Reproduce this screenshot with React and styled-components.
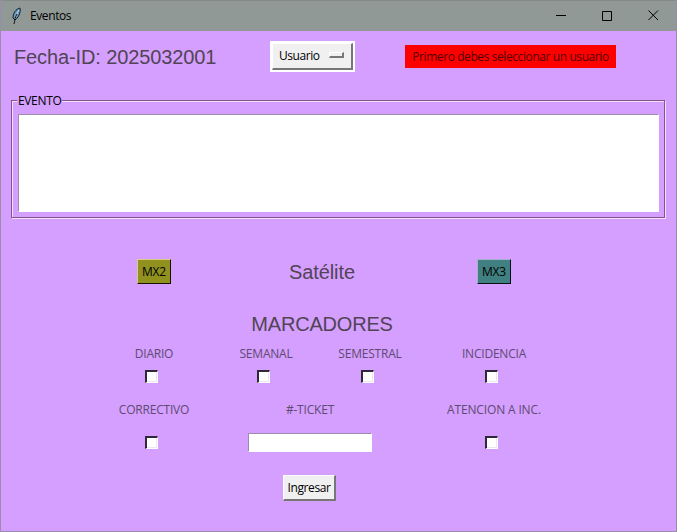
import React from 'react';
import styled, { createGlobalStyle } from 'styled-components';

const Global = createGlobalStyle`
  * { box-sizing: border-box; }
  body { margin: 0; background: #d49fff; }
`;
const Window = styled.main`
  width: 677px; height: 532px; background: #d49fff; overflow: hidden;
  border: 1px solid #9b8caa; border-top: 0;
  font: 12px/16px "Open Sans", "Noto Sans", sans-serif; color: #000;
  display: flex; flex-direction: column;
`;
const TitleBar = styled.header`
  height: 31px; flex: none; margin: 0 -1px; padding-left: 9px;
  background: #919996; border-top: 1px solid #858b89;
  display: flex; align-items: center;
`;
const Text = styled.span`
  white-space: nowrap; letter-spacing: ${p => p.$ls ?? 0}px;
`;
const AppTitle = styled(Text)`margin-left: 6px; flex: 1;`;
const Controls = styled.div`display: flex; width: 138px; height: 30px; margin-right: 1px; padding-bottom: 1px;`;
const Control = styled.div`
  width: 46px; display: flex; justify-content: center; align-items: center;
`;
const Heading = styled.h1`
  margin: 0; font: 400 20px/24px "Liberation Sans", Arial, sans-serif; color: #514455;
  white-space: nowrap; letter-spacing: ${p => p.$ls ?? 0}px;
`;
const Header = styled.section`
  height: 52px; flex: none; padding-left: 13px; display: grid;
  grid-template-columns: 256px 135px 211px; align-items: center;
`;
const SelectFrame = styled.div`
  width: 85px; height: 31px; padding: 2px; margin-bottom: 1px; background: #fff;
`;
const Select = styled.button`
  width: 81px; height: 27px; padding: 0 7px 0 6px; background: #f0f0f0;
  border: 1px solid #fff; border-right: 2px solid #767676; border-bottom: 2px solid #767676;
  font: inherit; color: inherit; display: flex; align-items: center; justify-content: space-between;
`;
const Indicator = styled.i`
  width: 15px; height: 6px; background: #f0f0f0; margin-top: -2px;
  border: 1px solid #fff; border-right: 2px solid #777; border-bottom: 2px solid #777;
`;
const Alert = styled.div`
  width: 211px; height: 23px; margin-bottom: 1px; padding-top: 1px; background: #f00; color: #510000;
  display: flex; align-items: center; justify-content: center;
`;
const EventGroup = styled.section`
  margin: 17px 0 0 10px; width: 654px; height: 118px; flex: none;
  border: 1px solid #82558f; padding: 0 5px 0 6px;
  box-shadow: inset 1px 1px 0 #f6ddff, 1px 1px 0 #f6ddff;
`;
const Legend = styled.div`
  width: 45px; height: 16px; margin: -8px 0 0 -1px; padding-left: 1px; background: #d49fff;
`;
const EventInput = styled.textarea`
  display: block; resize: none; width: 641px; height: 98px; margin-top: 5px;
  border: 1px solid #9b8caa; border-right-color: #fff; border-bottom-color: #fff;
  background: #fff; outline: 0;
`;
const Satellites = styled.section`
  height: 26px; flex: none; margin: 40px 0 0 136px; display: grid;
  grid-template-columns: 34px 302px 42px; align-items: center; justify-items: center;
`;
const Button = styled.button`
  width: ${p => p.$w ?? 34}px; height: ${p => p.$h ?? 25}px; padding: 1px 0 0;
  background: ${p => p.$bg ?? '#f0f0f0'}; border: 1px solid ${p => p.$light ?? '#fff'};
  border-right: ${p => p.$edge ?? 2}px solid ${p => p.$dark ?? '#777'};
  border-bottom: ${p => p.$edge ?? 2}px solid ${p => p.$dark ?? '#777'};
  font: inherit; color: inherit; display: flex; justify-content: center; align-items: center;
`;
const SatelliteTitle = styled(Heading)`padding-top: 2px;`;
const MarkerTitle = styled.div`
  margin: 28px 0 0 97px; width: 448px; height: 24px; flex: none; display: flex; justify-content: center;
`;
const Markers = styled.section`
  height: 40px; flex: none; margin: 10px 0 0 97px; display: grid;
  grid-template-columns: 112px 112px 96px 152px;
`;
const ActivityMarkers = styled(Markers)`
  height: 54px; margin-top: 16px; grid-template-columns: 112px 200px 168px;
`;
const Marker = styled.label`
  display: flex; flex-direction: column; align-items: center; color: #604a70;
`;
const Check = styled.input.attrs({ type: 'checkbox' })`
  appearance: none; width: 13px; height: 13px; margin: ${p => p.$gap ?? 8}px 6px 0 0;
  background: #fff; border: 2px solid #111; border-top-color: #30273a; border-left-color: #30273a;
  border-right: 1px solid #fff; border-bottom: 1px solid #fff;
  box-shadow: inset -1px -1px 0 #eee6f2;
`;
const Ticket = styled.input`
  width: 124px; height: 19px; margin: 15px 0 0; border: 1px solid #9b8caa;
  border-right-color: #fff; border-bottom-color: #fff; background: #fff; outline: 0;
`;
const Submit = styled(Button)`margin: 19px 0 0 282px; flex: none;`;

const Feather = () => (
  <svg width="15" height="18" viewBox="0 0 15 18" fill="none">
    <path d="M11 1C7 2 4 6 4 11L6 13C9 11 12 6 11 1Z" fill="#6798bd" stroke="#111d29" />
    <path d="M10 3C8 6 7 9 6 12" stroke="#c9e2f5" />
    <path d="M8 7C6 10 6 13 5 17" stroke="#111" />
  </svg>
);

export default function App() {
  return (
    <>
      <Global />
      <Window>
        <TitleBar>
          <Feather /><AppTitle $ls={-0.4}>Eventos</AppTitle>
          <Controls>
            <Control><svg width="11" height="11"><path d="M0 5.5H10" stroke="#000" /></svg></Control>
            <Control><svg width="10" height="10"><path d="M.5.5H9.5V9.5H.5Z" fill="none" stroke="#000" /></svg></Control>
            <Control><svg width="11" height="11"><path d="M.5.5L10 10M10 .5L.5 10" stroke="#000" /></svg></Control>
          </Controls>
        </TitleBar>
        <Header>
          <Heading $ls={-0.12}>Fecha-ID: 2025032001</Heading>
          <SelectFrame><Select><Text $ls={-0.45}>Usuario</Text><Indicator /></Select></SelectFrame>
          <Alert><Text $ls={-0.41}>Primero debes seleccionar un usuario</Text></Alert>
        </Header>
        <EventGroup>
          <Legend><Text $ls={-0.35}>EVENTO</Text></Legend>
          <EventInput aria-label="EVENTO" />
        </EventGroup>
        <Satellites>
          <Button $edge={1} $bg="#91911f" $light="#dccb86" $dark="#171300"><Text $ls={-0.2}>MX2</Text></Button>
          <SatelliteTitle $ls={-0.1}>Satélite</SatelliteTitle>
          <Button $edge={1} $bg="#408080" $light="#a9afd0" $dark="#07121b"><Text $ls={-0.2}>MX3</Text></Button>
        </Satellites>
        <MarkerTitle><Heading $ls={-0.2}>MARCADORES</Heading></MarkerTitle>
        <Markers>
          {['DIARIO', 'SEMANAL', 'SEMESTRAL', 'INCIDENCIA'].map(label => (
            <Marker key={label}><Text $ls={-0.2}>{label}</Text><Check /></Marker>
          ))}
        </Markers>
        <ActivityMarkers>
          <Marker><Text $ls={-0.2}>CORRECTIVO</Text><Check $gap={18} /></Marker>
          <Marker><Text $ls={-0.2}>#-TICKET</Text><Ticket /></Marker>
          <Marker><Text $ls={-0.15}>ATENCION A INC.</Text><Check $gap={18} /></Marker>
        </ActivityMarkers>
        <Submit $w={53} $h={26}><Text $ls={-0.4}>Ingresar</Text></Submit>
      </Window>
    </>
  );
}
